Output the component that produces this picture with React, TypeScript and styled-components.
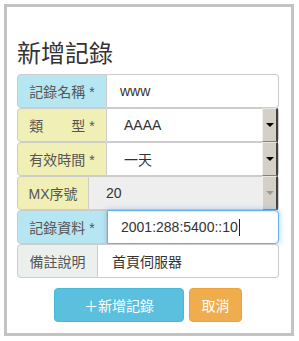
import styled, { createGlobalStyle } from "styled-components";

const GlobalStyle = createGlobalStyle`
  body {
    margin: 0;
    background: #fff;
    font-family: "Liberation Sans", "Noto Sans CJK TC", sans-serif;
  }
`;

const BLUE = "#b6e6f2";
const YELLOW = "#efefb6";
const GRAY = "#ebf0ed";

const App = () => {
  return (
    <>
      <GlobalStyle />
      <Panel>
        <Title>新增記錄</Title>
        <Form>
          <Row>
            <Label $bg={BLUE} $w={90}>記錄名稱 *</Label>
            <Input $pad={13}>www</Input>
          </Row>
          <Row>
            <Label $bg={YELLOW} $w={90}>類　　型 *</Label>
            <Input $pad={17}>
              AAAA
              <DropButton>
                <Arrow />
              </DropButton>
            </Input>
          </Row>
          <Row>
            <Label $bg={YELLOW} $w={90}>有效時間 *</Label>
            <Input $pad={17}>
              一天
              <DropButton>
                <Arrow />
              </DropButton>
            </Input>
          </Row>
          <Row>
            <Label $bg={YELLOW} $w={72}>MX序號</Label>
            <Input $pad={17} $disabled>
              20
              <DropButton>
                <Arrow $disabled />
              </DropButton>
            </Input>
          </Row>
          <Row>
            <Label $bg={BLUE} $w={90}>記錄資料 *</Label>
            <Input $pad={13} $focus>
              2001:288:5400::10
              <Caret />
            </Input>
          </Row>
          <Row>
            <Label $bg={GRAY} $w={81}>備註說明</Label>
            <Input $pad={14}>首頁伺服器</Input>
          </Row>
        </Form>
        <Actions>
          <Button $bg="#5bc0de" $border="#46b8da" $w={130}>＋新增記錄</Button>
          <Button $bg="#f0ad4e" $border="#eea236" $w={53}>取消</Button>
        </Actions>
      </Panel>
    </>
  );
};

export default App;

const Panel = styled.div`
  box-sizing: border-box;
  margin: 4px;
  width: 290px;
  height: 332px;
  border: 3px solid #c3c3c3;
  padding: 32px 12px 0 10px;
`;

const Title = styled.h1`
  margin: 0 0 9px;
  font-size: 24px;
  line-height: 26px;
  font-weight: normal;
  color: #333;
  font-family: "Noto Sans CJK TC", sans-serif;
`;

const Form = styled.div`
  display: flex;
  flex-direction: column;
`;

const Row = styled.div`
  display: flex;
  height: 34px;
`;

const Label = styled.div<{ $bg: string; $w: number }>`
  box-sizing: border-box;
  flex: 0 0 ${(p) => p.$w}px;
  display: flex;
  align-items: center;
  justify-content: center;
  background: ${(p) => p.$bg};
  border: 1px solid #ccc;
  border-radius: 4px 0 0 4px;
  font-size: 14px;
  color: #555;
  white-space: pre;
`;

const Input = styled.div<{ $pad: number; $disabled?: boolean; $focus?: boolean }>`
  position: relative;
  box-sizing: border-box;
  flex: 1;
  display: flex;
  align-items: center;
  padding-left: ${(p) => p.$pad}px;
  background: ${(p) => (p.$disabled ? "#eee" : "#fff")};
  border: 1px solid ${(p) => (p.$focus ? "#66afe9" : "#ccc")};
  border-left: ${(p) => (p.$focus ? "1px solid #66afe9" : "0")};
  border-radius: 0 4px 4px 0;
  box-shadow: ${(p) =>
    p.$focus ? "inset 0 1px 1px rgba(0,0,0,.075), 0 0 6px rgba(102,175,233,.6)" : "none"};
  font-size: 14px;
  color: #333;
`;

const Caret = styled.span`
  display: inline-block;
  width: 1px;
  height: 17px;
  background: #222;
  margin-left: 1px;
`;

const DropButton = styled.div`
  position: absolute;
  top: -1px;
  bottom: -1px;
  right: 0;
  width: 16px;
  box-sizing: border-box;
  display: flex;
  align-items: center;
  justify-content: center;
  background: #d4d0c8;
  border-top: 1px solid #e8e6e1;
  border-left: 1px solid #f0efeb;
  border-right: 2px solid #404040;
  border-bottom: 1px solid #808080;
`;

const Arrow = styled.span<{ $disabled?: boolean }>`
  width: 0;
  height: 0;
  border-left: 4px solid transparent;
  border-right: 4px solid transparent;
  border-top: 4px solid ${(p) => (p.$disabled ? "#9a9a9a" : "#000")};
`;

const Actions = styled.div`
  display: flex;
  justify-content: center;
  gap: 5px;
  margin-top: 10px;
`;

const Button = styled.button<{ $bg: string; $border: string; $w: number }>`
  box-sizing: border-box;
  width: ${(p) => p.$w}px;
  height: 34px;
  padding: 0;
  background: ${(p) => p.$bg};
  border: 1px solid ${(p) => p.$border};
  border-radius: 4px;
  color: #fff;
  font-size: 14px;
  font-family: "Liberation Sans", "Noto Sans CJK TC", sans-serif;
  cursor: pointer;
`;
